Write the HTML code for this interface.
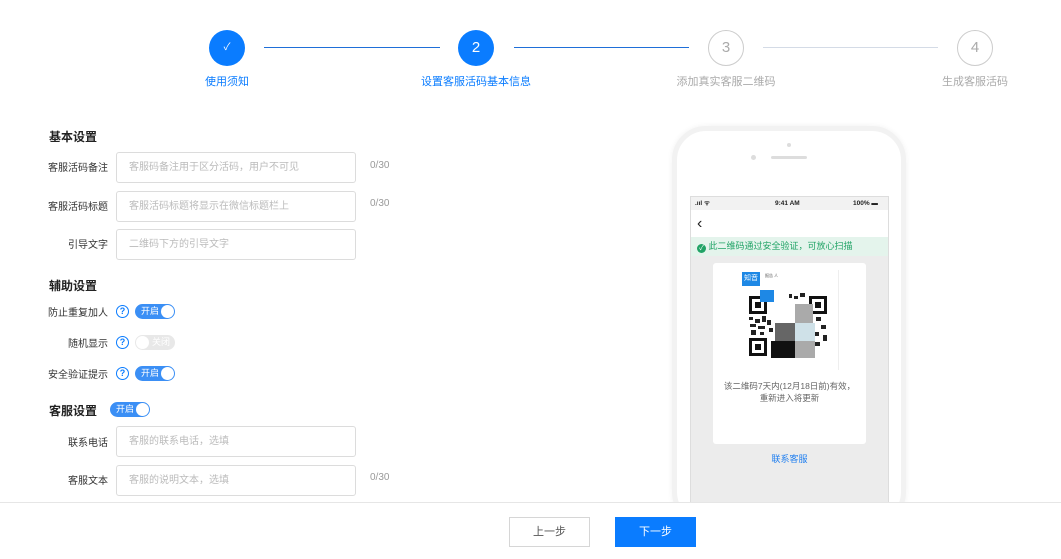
<!DOCTYPE html>
<html><head><meta charset="utf-8"><style>
*{margin:0;padding:0;box-sizing:border-box}
body{width:1061px;height:559px;background:#fff;position:relative;overflow:hidden;font-family:"Liberation Sans","Noto Sans CJK SC",sans-serif;font-size:11px;color:#333}
.a{position:absolute}
.c{width:36px;height:36px;border-radius:50%;text-align:center;line-height:36px;font-size:15px}
.on{background:#0a7cff;color:#fff}
.off{border:1px solid #ccc;color:#aaa;line-height:34px}
.ln{height:1px;top:47px}
.sl{top:72px;font-size:11px;white-space:nowrap;transform:translateX(-50%)}
.h{font-weight:bold;font-size:12px;color:#222}
.lb{width:100px;text-align:right;left:8px;font-size:10px;color:#333}
.in{left:116px;width:240px;height:31px;border:1px solid #dcdcdc;border-radius:3px;padding-left:12px;line-height:29px;font-size:10px;color:#bbb}
.cnt{left:370px;font-size:10px;color:#999}
.q{width:13px;height:13px;border:1.3px solid #0a7cff;border-radius:50%;color:#0a7cff;font-size:9px;line-height:10px;text-align:center;font-weight:bold}
.tg{width:40px;height:15px;border-radius:8px;background:#3b8ff5;color:#fff;font-size:9px;line-height:15px;padding-left:6px}
.tg::after{content:"";position:absolute;right:1px;top:1px;width:13px;height:13px;border-radius:50%;background:#fff}
.tg.off2{background:#e8e8e8;color:#fff;padding-left:17px;border:none}
.tg.off2::after{left:1px;right:auto}
</style></head><body>
<div class="a c on" style="left:209px;top:30px;font-size:10px">✓</div>
<div class="a c on" style="left:458px;top:30px">2</div>
<div class="a c off" style="left:708px;top:30px">3</div>
<div class="a c off" style="left:957px;top:30px">4</div>
<div class="a ln" style="left:264px;width:176px;background:#1f6fd8"></div>
<div class="a ln" style="left:514px;width:175px;background:#1f6fd8"></div>
<div class="a ln" style="left:763px;width:175px;background:#d4dbe6"></div>
<div class="a sl" style="left:227px;top:73px;color:#0a7cff">使用须知</div>
<div class="a sl" style="left:476px;top:73px;color:#0a7cff">设置客服活码基本信息</div>
<div class="a sl" style="left:726px;top:73px;color:#aaa">添加真实客服二维码</div>
<div class="a sl" style="left:975px;top:73px;color:#aaa">生成客服活码</div>

<div class="a h" style="left:49px;top:128px">基本设置</div>
<div class="a lb" style="top:159px">客服活码备注</div>
<div class="a in" style="top:152px">客服码备注用于区分活码，用户不可见</div>
<div class="a cnt" style="top:160px">0/30</div>
<div class="a lb" style="top:198px">客服活码标题</div>
<div class="a in" style="top:191px">客服活码标题将显示在微信标题栏上</div>
<div class="a cnt" style="top:198px">0/30</div>
<div class="a lb" style="top:236px">引导文字</div>
<div class="a in" style="top:229px">二维码下方的引导文字</div>

<div class="a h" style="left:49px;top:277px">辅助设置</div>
<div class="a lb" style="top:304px">防止重复加人</div>
<div class="a q" style="left:116px;top:305px">?</div>
<div class="a tg" style="left:135px;top:304px">开启</div>
<div class="a lb" style="top:335px">随机显示</div>
<div class="a q" style="left:116px;top:336px">?</div>
<div class="a tg off2" style="left:135px;top:335px">关闭</div>
<div class="a lb" style="top:366px">安全验证提示</div>
<div class="a q" style="left:116px;top:367px">?</div>
<div class="a tg" style="left:135px;top:366px">开启</div>

<div class="a h" style="left:49px;top:402px">客服设置</div>
<div class="a tg" style="left:110px;top:402px">开启</div>
<div class="a lb" style="top:434px">联系电话</div>
<div class="a in" style="top:426px">客服的联系电话，选填</div>
<div class="a lb" style="top:472px">客服文本</div>
<div class="a in" style="top:465px">客服的说明文本，选填</div>
<div class="a cnt" style="top:472px">0/30</div>

<!-- phone -->
<div class="a" style="left:672px;top:126px;width:234px;height:400px;border-radius:34px;background:#fff;border:5px solid #f2f2f2;box-shadow:0 0 6px rgba(0,0,0,.06)"></div>
<div class="a" style="left:787px;top:143px;width:4px;height:4px;border-radius:50%;background:#ddd"></div>
<div class="a" style="left:751px;top:155px;width:5px;height:5px;border-radius:50%;background:#ddd"></div>
<div class="a" style="left:771px;top:156px;width:36px;height:3px;border-radius:2px;background:#ddd"></div>
<div class="a" style="left:690px;top:196px;width:199px;height:310px;background:#ececec;border:1px solid #ddd"></div>
<div class="a" style="left:691px;top:197px;width:197px;height:13px;background:#f2f2f2;font-size:6.5px;line-height:13px;color:#222;font-weight:bold">
<span class="a" style="left:4px">.ııl ᯤ</span><span class="a" style="left:84px">9:41 AM</span><span class="a" style="left:162px">100% ▬</span></div>
<div class="a" style="left:691px;top:210px;width:197px;height:27px;background:#fff;font-size:16px;line-height:27px;padding-left:6px;color:#222">‹</div>
<div class="a" style="left:691px;top:237px;width:197px;height:19px;background:#e4f4ec;font-size:9px;line-height:19px;color:#21a366;padding-left:6px"><span style="display:inline-block;width:9px;height:9px;border-radius:50%;background:#21a366;color:#fff;font-size:7px;line-height:9px;text-align:center;vertical-align:-1px">✓</span> 此二维码通过安全验证，可放心扫描</div>
<div class="a" style="left:713px;top:263px;width:153px;height:181px;background:#fff;border-radius:3px"></div>
<div class="a" style="left:742px;top:272px;width:18px;height:14px;background:#1e88e5;color:#fff;font-size:7px;line-height:14px;text-align:center">知音</div>
<div class="a" style="left:765px;top:273px;font-size:4px;color:#555">报告 人</div>
<svg class="a" style="left:747px;top:290px" width="82" height="70" viewBox="0 0 82 70">
<rect width="82" height="70" fill="#fff"/>
<g fill="#111"><rect x="2" y="6" width="18" height="18"/><rect x="62" y="6" width="18" height="18"/><rect x="2" y="48" width="18" height="18"/></g>
<g fill="#fff"><rect x="5" y="9" width="12" height="12"/><rect x="65" y="9" width="12" height="12"/><rect x="5" y="51" width="12" height="12"/></g>
<g fill="#111"><rect x="8" y="12" width="6" height="6"/><rect x="68" y="12" width="6" height="6"/><rect x="8" y="54" width="6" height="6"/></g>
<g fill="#222"><rect x="2" y="27" width="4" height="3"/><rect x="8" y="29" width="5" height="4"/><rect x="15" y="26" width="4" height="6"/><rect x="3" y="34" width="6" height="3"/><rect x="11" y="36" width="7" height="3"/><rect x="20" y="30" width="4" height="5"/><rect x="4" y="40" width="5" height="5"/><rect x="13" y="42" width="4" height="3"/><rect x="22" y="38" width="4" height="4"/>
<rect x="42" y="4" width="3" height="4"/><rect x="47" y="6" width="4" height="3"/><rect x="53" y="3" width="5" height="4"/><rect x="69" y="27" width="5" height="4"/><rect x="62" y="30" width="4" height="6"/><rect x="74" y="35" width="5" height="4"/><rect x="66" y="42" width="6" height="4"/><rect x="76" y="45" width="4" height="6"/><rect x="68" y="52" width="5" height="4"/></g>
<rect x="13" y="0" width="14" height="12" fill="#1e88e5"/>
<rect x="28" y="33" width="20" height="18" fill="#666"/><rect x="48" y="14" width="18" height="19" fill="#aaa"/>
<rect x="48" y="33" width="20" height="18" fill="#cfe1e8"/><rect x="24" y="51" width="24" height="17" fill="#111"/><rect x="48" y="51" width="20" height="17" fill="#aaa"/>
</svg>
<div class="a" style="left:838px;top:270px;width:1px;height:100px;background:#eee"></div>
<div class="a" style="left:713px;top:380px;width:153px;text-align:center;font-size:8.5px;line-height:12px;color:#666">该二维码7天内(12月18日前)有效，<br>重新进入将更新</div>
<div class="a" style="left:713px;top:452px;width:153px;text-align:center;font-size:9px;color:#1e7ef0">联系客服</div>

<!-- bottom -->
<div class="a" style="left:0;top:502px;width:1061px;height:57px;background:#fff;border-top:1px solid #e6e6e6"></div>
<div class="a" style="left:509px;top:517px;width:81px;height:30px;border:1px solid #d6d6d6;text-align:center;line-height:28px;font-size:11px;color:#555">上一步</div>
<div class="a" style="left:615px;top:517px;width:81px;height:30px;background:#0a7cff;text-align:center;line-height:30px;font-size:11px;color:#fff">下一步</div>
</body></html>
